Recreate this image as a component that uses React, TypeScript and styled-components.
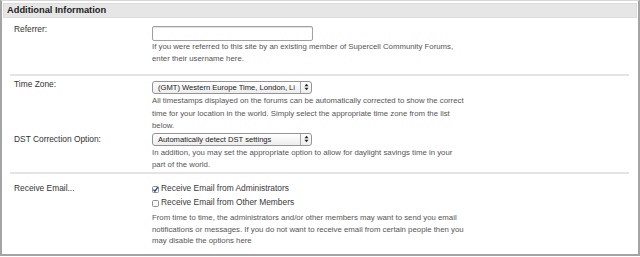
import styled, { createGlobalStyle } from "styled-components";

const GlobalStyle = createGlobalStyle`
  html, body {
    margin: 0;
    padding: 0;
    background: #ffffff;
  }
  body {
    font-family: "Liberation Sans", Arial, sans-serif;
  }
`;

const FrameStyled = styled.div`
  box-sizing: border-box;
  width: 640px;
  height: 256px;
  border: 2px solid #a4a4a4;
  border-top: 1px solid #d6d6d6;
  padding: 2px 1px 0 1px;
`;

const HeaderStyled = styled.div`
  box-sizing: border-box;
  height: 15px;
  background: #e6e6e6;
  border: 1px solid #dcdcdc;
  padding-left: 3px;
  font-size: 9.3px;
  font-weight: bold;
  line-height: 13px;
  color: #222222;
`;

const SectionStyled = styled.div<{ $top: number; $bottom: number; $last?: boolean }>`
  margin: 0 8px 0 7px;
  padding: ${(p) => p.$top}px 0 ${(p) => p.$bottom}px 0;
  border-bottom: ${(p) => (p.$last ? "none" : "2px solid #e4e4e4")};
  display: flex;
  flex-direction: column;
`;

const RowStyled = styled.div<{ $gap?: number }>`
  display: grid;
  grid-template-columns: 138px 1fr;
  padding-left: 4px;
  margin-top: ${(p) => p.$gap ?? 0}px;
`;

const LabelStyled = styled.div<{ $offset?: number }>`
  font-size: 8.4px;
  line-height: 13px;
  color: #333333;
  margin-top: ${(p) => p.$offset ?? 0}px;
`;

const ControlColumn = styled.div`
  display: flex;
  flex-direction: column;
  align-items: flex-start;
`;

const DescriptionStyled = styled.div<{ $lh?: number; $top?: number }>`
  font-size: 7.8px;
  line-height: ${(p) => p.$lh ?? 12.4}px;
  color: #555555;
  margin-top: ${(p) => p.$top ?? 0}px;
  white-space: nowrap;
`;

const TextInputStyled = styled.div`
  box-sizing: border-box;
  width: 161px;
  height: 15px;
  border: 1px solid #a0a0a0;
  border-radius: 2px;
  background: #ffffff;
  box-shadow: inset 0 1px 1px rgba(0, 0, 0, 0.12);
`;

const SelectStyled = styled.div<{ $width: number }>`
  box-sizing: border-box;
  width: ${(p) => p.$width}px;
  height: 13px;
  border: 1px solid #949494;
  border-radius: 3px;
  background: linear-gradient(#ffffff, #ededed);
  display: flex;
  align-items: center;
  font-size: 7.6px;
  color: #1a1a1a;
`;

const SelectText = styled.span`
  flex: 1;
  padding-left: 5px;
  white-space: nowrap;
  line-height: 11px;
`;

const SelectArrows = styled.span`
  width: 10px;
  height: 11px;
  border-left: 1px solid #a8a8a8;
  display: flex;
  align-items: center;
  justify-content: center;
`;

const CheckRowStyled = styled.label`
  display: flex;
  align-items: center;
  gap: 2px;
  height: 14.4px;
  font-size: 8.4px;
  color: #3a3a3a;
`;

const BoxStyled = styled.span`
  display: inline-flex;
  width: 7px;
  height: 7px;
  margin-top: 2px;
`;

function Arrows() {
  return (
    <svg width="5" height="8" viewBox="0 0 5 8">
      <path d="M0.5 3.3 L2.5 0.8 L4.5 3.3 Z" fill="#222" />
      <path d="M0.5 4.7 L2.5 7.2 L4.5 4.7 Z" fill="#222" />
    </svg>
  );
}

function Select({ value, width }: { value: string; width: number }) {
  return (
    <SelectStyled $width={width}>
      <SelectText>{value}</SelectText>
      <SelectArrows>
        <Arrows />
      </SelectArrows>
    </SelectStyled>
  );
}

function Checkbox({ checked, label }: { checked?: boolean; label: string }) {
  return (
    <CheckRowStyled>
      <BoxStyled>
        <svg width="7" height="7" viewBox="0 0 7 7">
          <rect x="0.5" y="0.5" width="6" height="6" rx="1" fill="#fbfbfb" stroke="#8f8f8f" />
          {checked && (
            <path d="M1.4 3.6 L2.9 5.2 L5.9 1.2" fill="none" stroke="#23407a" strokeWidth="1.3" />
          )}
        </svg>
      </BoxStyled>
      {label}
    </CheckRowStyled>
  );
}

export default function App() {
  return (
    <>
      <GlobalStyle />
      <FrameStyled>
        <HeaderStyled>Additional Information</HeaderStyled>

        <SectionStyled $top={8} $bottom={8}>
          <RowStyled>
            <LabelStyled $offset={-3}>Referrer:</LabelStyled>
            <ControlColumn>
              <TextInputStyled />
              <DescriptionStyled>
                If you were referred to this site by an existing member of Supercell Community Forums,
                <br />
                enter their username here.
              </DescriptionStyled>
            </ControlColumn>
          </RowStyled>
        </SectionStyled>

        <SectionStyled $top={5} $bottom={0}>
          <RowStyled>
            <LabelStyled $offset={-3}>Time Zone:</LabelStyled>
            <ControlColumn>
              <Select width={160} value="(GMT) Western Europe Time, London, Li" />
              <DescriptionStyled $top={1.5}>
                All timestamps displayed on the forums can be automatically corrected to show the correct
                <br />
                time for your location in the world. Simply select the appropriate time zone from the list
                <br />
                below.
              </DescriptionStyled>
            </ControlColumn>
          </RowStyled>
          <RowStyled $gap={0}>
            <LabelStyled>DST Correction Option:</LabelStyled>
            <ControlColumn>
              <Select width={160} value="Automatically detect DST settings" />
              <DescriptionStyled $top={1.5}>
                In addition, you may set the appropriate option to allow for daylight savings time in your
                <br />
                part of the world.
              </DescriptionStyled>
            </ControlColumn>
          </RowStyled>
        </SectionStyled>

        <SectionStyled $top={7} $bottom={0} $last>
          <RowStyled>
            <LabelStyled $offset={1}>Receive Email...</LabelStyled>
            <ControlColumn>
              <Checkbox checked label="Receive Email from Administrators" />
              <Checkbox label="Receive Email from Other Members" />
              <DescriptionStyled $lh={11.4} $top={2.5}>
                From time to time, the administrators and/or other members may want to send you email
                <br />
                notifications or messages. If you do not want to receive email from certain people then you
                <br />
                may disable the options here
              </DescriptionStyled>
            </ControlColumn>
          </RowStyled>
        </SectionStyled>
      </FrameStyled>
    </>
  );
}
